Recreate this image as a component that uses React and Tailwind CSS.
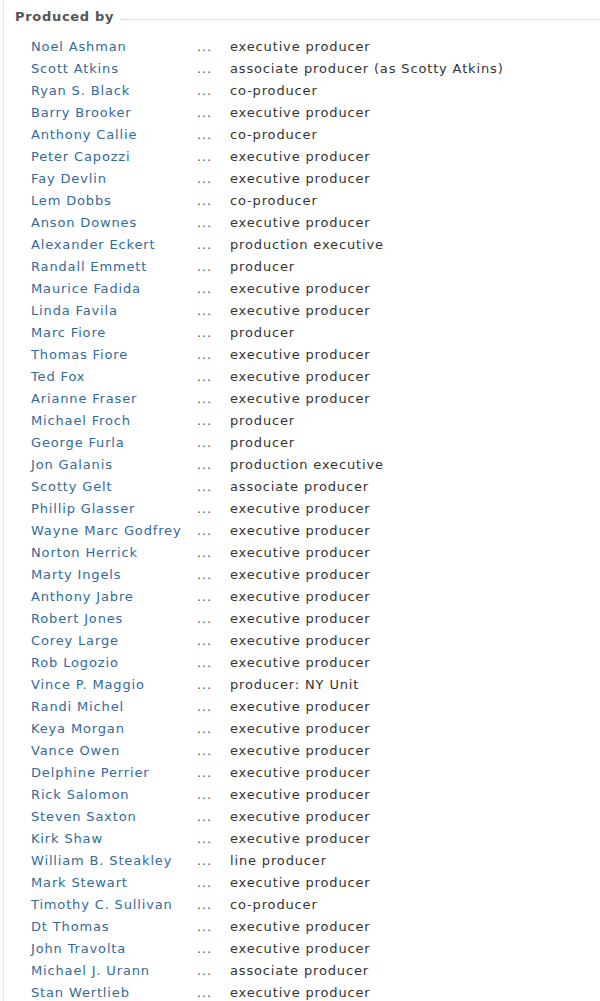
const credits = [
  ['Noel Ashman', 'executive producer'],
  ['Scott Atkins', 'associate producer (as Scotty Atkins)'],
  ['Ryan S. Black', 'co-producer'],
  ['Barry Brooker', 'executive producer'],
  ['Anthony Callie', 'co-producer'],
  ['Peter Capozzi', 'executive producer'],
  ['Fay Devlin', 'executive producer'],
  ['Lem Dobbs', 'co-producer'],
  ['Anson Downes', 'executive producer'],
  ['Alexander Eckert', 'production executive'],
  ['Randall Emmett', 'producer'],
  ['Maurice Fadida', 'executive producer'],
  ['Linda Favila', 'executive producer'],
  ['Marc Fiore', 'producer'],
  ['Thomas Fiore', 'executive producer'],
  ['Ted Fox', 'executive producer'],
  ['Arianne Fraser', 'executive producer'],
  ['Michael Froch', 'producer'],
  ['George Furla', 'producer'],
  ['Jon Galanis', 'production executive'],
  ['Scotty Gelt', 'associate producer'],
  ['Phillip Glasser', 'executive producer'],
  ['Wayne Marc Godfrey', 'executive producer'],
  ['Norton Herrick', 'executive producer'],
  ['Marty Ingels', 'executive producer'],
  ['Anthony Jabre', 'executive producer'],
  ['Robert Jones', 'executive producer'],
  ['Corey Large', 'executive producer'],
  ['Rob Logozio', 'executive producer'],
  ['Vince P. Maggio', 'producer: NY Unit'],
  ['Randi Michel', 'executive producer'],
  ['Keya Morgan', 'executive producer'],
  ['Vance Owen', 'executive producer'],
  ['Delphine Perrier', 'executive producer'],
  ['Rick Salomon', 'executive producer'],
  ['Steven Saxton', 'executive producer'],
  ['Kirk Shaw', 'executive producer'],
  ['William B. Steakley', 'line producer'],
  ['Mark Stewart', 'executive producer'],
  ['Timothy C. Sullivan', 'co-producer'],
  ['Dt Thomas', 'executive producer'],
  ['John Travolta', 'executive producer'],
  ['Michael J. Urann', 'associate producer'],
  ['Stan Wertlieb', 'executive producer'],
]

export default function App() {
  return (
    <div className="min-h-[1001px] bg-white pl-[3px]" style={{ fontFamily: '"DejaVu Sans", Verdana, sans-serif' }}>
      <div className="border-l border-[#e6e6e6] min-h-[1001px]">
        <div className="flex items-center h-[36px] pl-[11px]">
          <h4 className="text-[13px] font-bold text-[#555] leading-none tracking-[0.7px] -mt-[4px]">Produced by</h4>
          <div className="flex-1 ml-[6px] border-b border-dotted border-[#ccc] mt-[2px]" />
        </div>
        <table className="ml-[12px] text-[13px] text-[#333] tracking-[0.85px]">
          <tbody>
            {credits.map(([name, role]) => (
              <tr key={name} className="h-[22px]">
                <td className="w-[181px] pl-[15px]">
                  <a href="#" className="text-[#336a9a]">{name}</a>
                </td>
                <td className="w-[33px] text-[#555]">...</td>
                <td>{role}</td>
              </tr>
            ))}
          </tbody>
        </table>
      </div>
    </div>
  )
}
